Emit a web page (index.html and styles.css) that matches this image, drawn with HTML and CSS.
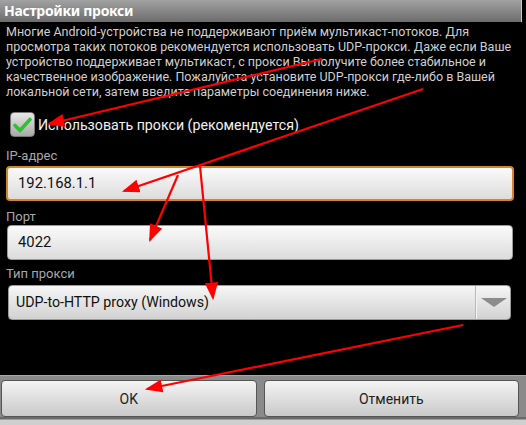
FILE: index.html
```html
<!DOCTYPE html>
<html lang="ru">
<head>
  <meta charset="UTF-8" />
  <meta name="viewport" content="width=device-width, initial-scale=1.0"/>
  <title>Настройки прокси</title>
  <link rel="stylesheet" href="styles.css">
</head>
<body>

<div class="dialog">
  <div class="title">Настройки прокси</div>

  <div class="content">
    <p class="desc">
      Многие Android-устройства не поддерживают приём мультикаст-потоков. Для<br>
      просмотра таких потоков рекомендуется использовать UDP-прокси. Даже если Ваше<br>
      устройство поддерживает мультикаст, с прокси Вы получите более стабильное и<br>
      качественное изображение. Пожалуйста установите UDP-прокси где-либо в Вашей<br>
      локальной сети, затем введите параметры соединения ниже.
    </p>

    <div class="check-row">
      <span class="checkbox">
        <svg width="19" height="16" viewBox="0 0 19 16">
          <path d="M2 8.5 L7 13.5 L17 2.5" fill="none" stroke="#2fc12f" stroke-width="3.6" stroke-linecap="round" stroke-linejoin="round"/>
        </svg>
      </span>
      <span class="check-label">Использовать прокси (рекомендуется)</span>
    </div>

    <div class="field-label first">IP-адрес</div>
    <div class="input focused">192.168.1.1</div>

    <div class="field-label">Порт</div>
    <div class="input">4022</div>

    <div class="field-label">Тип прокси</div>
    <div class="select">
      <span class="select-value">UDP-to-HTTP proxy (Windows)</span>
      <span class="select-arrow"></span>
    </div>
  </div>

  <div class="buttons">
    <button class="btn">OK</button>
    <button class="btn">Отменить</button>
  </div>
  <div class="bottom-strip"></div>
</div>

<!-- red annotation arrows -->
<svg class="arrows" width="526" height="425" viewBox="0 0 526 425">
  <defs>
    <marker id="head" markerWidth="8" markerHeight="6" refX="7" refY="3" orient="auto" markerUnits="strokeWidth">
      <path d="M0 0 L8 3 L0 6 Z" fill="#f00"/>
    </marker>
  </defs>
  <g stroke="#f00" stroke-width="2.2" fill="none">
    <line x1="322" y1="59" x2="49" y2="124" marker-end="url(#head)"/>
    <line x1="423" y1="89" x2="124" y2="191" marker-end="url(#head)"/>
    <line x1="178" y1="175" x2="150" y2="240" marker-end="url(#head)"/>
    <line x1="200" y1="166" x2="213" y2="298" marker-end="url(#head)"/>
    <line x1="463" y1="325" x2="147" y2="389" marker-end="url(#head)"/>
  </g>
</svg>

</body>
</html>
```

FILE: styles.css
```css
body {
  margin: 0;
  background: #000;
  font-family: Roboto, "Noto Sans", sans-serif;
  overflow: hidden;
}

.dialog {
  width: 526px;
  height: 425px;
  display: flex;
  flex-direction: column;
}

.title {
  height: 22px;
  flex-shrink: 0;
  width: 522px;
  box-sizing: border-box;
  padding: 0 4px;
  background: linear-gradient(#a2a2a2, #6c6c6c);
  border-right: 1px solid #c8c8c8;
  color: #fff;
  font-family: "Noto Sans", sans-serif;
  font-weight: bold;
  font-size: 14px;
  line-height: 22px;
  letter-spacing: -0.3px;
}

.content {
  padding: 2px 0 0;
  flex-grow: 1;
}

.desc {
  margin: 0 0 0 6px;
  color: #cfcfcf;
  font-size: 12.5px;
  line-height: 15px;
  white-space: nowrap;
}

.check-row {
  display: flex;
  align-items: center;
  margin: 13px 0 0 10px;
  height: 25px;
}

.checkbox {
  width: 25px;
  height: 25px;
  box-sizing: border-box;
  border-radius: 4px;
  background: linear-gradient(#e8e8e8, #a8a8a8);
  border: 1px solid #777;
  display: flex;
  align-items: center;
  justify-content: center;
}

.check-label {
  margin-left: 3px;
  color: #f2f2f2;
  font-size: 14.2px;
}

.field-label {
  margin: 9px 0 0 6px;
  color: #a8a8a8;
  font-size: 13px;
  line-height: 14px;
}

.field-label.first {
  margin-top: 12px;
}

.input {
  margin: 1px 13px 0 7px;
  height: 35px;
  box-sizing: border-box;
  border-radius: 4px;
  border: 1px solid #9a9a9a;
  background: linear-gradient(#fafafa, #dcdcdc);
  color: #111;
  font-size: 14.8px;
  line-height: 33px;
  padding-left: 10px;
}

.input.focused {
  margin: 3px 12px 0 6px;
  border: 2px solid #d8832e;
  line-height: 31px;
}

.input:not(.focused) + .field-label {
  margin-top: 7px;
}

.select {
  margin: 4px 15px 0 8px;
  height: 35px;
  box-sizing: border-box;
  border-radius: 4px;
  border: 1px solid #9a9a9a;
  background: linear-gradient(#f6f6f6, #d2d2d2);
  display: flex;
}

.select-value {
  flex-grow: 1;
  padding-left: 7px;
  color: #111;
  font-size: 14.2px;
  line-height: 33px;
  border-right: 1px solid #b8b8b8;
}

.select-arrow {
  width: 33px;
  display: flex;
  align-items: center;
  justify-content: center;
  border-left: 1px solid #f4f4f4;
}

.select-arrow::after {
  content: "";
  border-left: 13px solid transparent;
  border-right: 13px solid transparent;
  border-top: 9px solid #8c8c8c;
}

.buttons {
  height: 42px;
  flex-shrink: 0;
  box-sizing: border-box;
  background: #8a8a8a;
  border-top: 1px solid #a8a8a8;
  display: flex;
  gap: 7px;
  padding: 4px 7px 0 1px;
}

.btn {
  flex: 1;
  height: 37px;
  border: 1px solid #555;
  border-radius: 4px;
  background: linear-gradient(#f4f4f4, #c9c9c9);
  color: #222;
  font-family: Roboto, "Noto Sans", sans-serif;
  font-size: 14px;
  padding: 0;
}

.bottom-strip {
  height: 8px;
  flex-shrink: 0;
  background: linear-gradient(#6a6a6a 0, #6a6a6a 2px, #cfcfcf 3px);
}

.arrows {
  position: absolute;
  left: 0;
  top: 0;
}
```
